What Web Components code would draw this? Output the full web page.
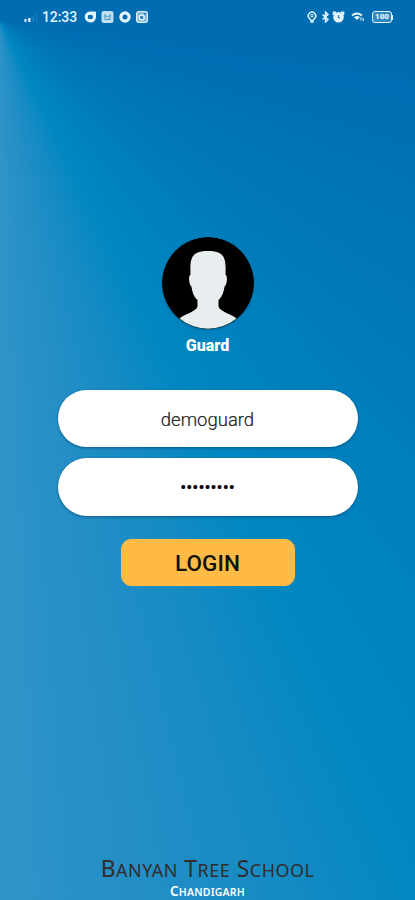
<!DOCTYPE html>
<html lang="en">
<head>
<meta charset="utf-8">
<meta name="viewport" content="width=device-width, initial-scale=1">
<title>Guard Login</title>
<style>
	body {
		margin: 0px;
		font-family: Roboto, sans-serif;
	}
</style>
</head>
<body>

<template id="status-bar-template">
	<style>
		:host {
			display: flex;
			justify-content: space-between;
			align-items: center;
			box-sizing: border-box;
			height: 34px;
			padding: 0px 22px 0px 23px;
			color: #e4f4fb;
		}
		div {
			display: flex;
			align-items: center;
		}
		svg {
			display: block;
			fill: none;
			stroke: currentColor;
		}
		.solid {
			fill: currentColor;
			stroke: none;
		}
		#time {
			width: 42px;
			font-size: 14px;
			font-weight: 500;
			line-height: 16px;
			letter-spacing: -0.1px;
			white-space: nowrap;
		}
		#battery {
			display: grid;
			place-items: center;
			box-sizing: border-box;
			width: 20px;
			height: 12px;
			border: 1px solid currentColor;
			border-radius: 3px;
			background: #ffffff30;
			font-size: 8px;
			font-weight: 900;
			line-height: 8px;
		}
		#tip {
			width: 1px;
			height: 5px;
			background: currentColor;
		}
	</style>
	<div>
		<svg width="19" height="12" viewBox="0 0 19 12" class="solid">
			<path d="M1.500 8h2v3h-2zM5.200 7h2.300v4H5.200z"/>
			<path d="M9.500 5H11v6H9.500zM13 3h1v8h-1z" opacity=".15"/>
		</svg>
		<span id="time">12:33</span>
		<svg width="13" height="12" viewBox="0 0 13 12" class="solid">
			<path fill-rule="evenodd" d="M6 .5h5q1 0 1 1V6a5.500 5.500 0 0 1-5.500 5.500A5.500 5.500 0 0 1 6 .5zM5 4Q3.800 4 3.800 6T5 8h2.500q1.500 0 1.500-2T7.500 4z"/>
		</svg>
		<svg width="13" height="12" viewBox="0 0 13 12" style="margin-left: 4px">
			<rect x=".5" width="12" height="12" rx="2.500" class="solid" opacity=".85"/>
			<path d="M3 3.500l1.500 1 2 1.500 2-1.500 1.500-1M4 4.500v4h5v-4" stroke="#3b8fc4"/>
		</svg>
		<svg width="12" height="12" viewBox="0 0 12 12" style="margin-left: 5px">
			<circle cx="6" cy="6" r="4.100" stroke-width="3.200"/>
		</svg>
		<svg width="12" height="12" viewBox="0 0 12 12" style="margin-left: 5px">
			<rect x=".7" y=".7" width="10.600" height="10.600" rx="2" stroke-width="1.300" fill="#75b4da"/>
			<circle cx="5.700" cy="6.500" r="2.500" stroke-width="1.500" fill="#2380bc"/>
			<path d="M8.200 2.800h1.800" stroke="#1274b7" stroke-width="1.500"/>
		</svg>
	</div>
	<div>
		<svg width="10" height="12" viewBox="0 0 10 12">
			<path d="M5 10.500L2.200 7.300A3.700 3.700 0 1 1 7.800 7.300z" stroke-width="1.500"/>
			<circle cx="5" cy="4.700" r="1.300"/>
			<path d="M3 11h4"/>
		</svg>
		<svg width="9" height="12" viewBox="0 0 9 12" style="margin-left: 4px">
			<path d="M1.500 3.500l5.500 5L4.500 11V1L7 3.500l-5.500 5" stroke-width="1.500"/>
		</svg>
		<svg width="13" height="12" viewBox="0 0 13 12" style="margin-left: 2px">
			<circle cx="6.500" cy="6.200" r="5.300" class="solid"/>
			<path d="M1.600 4V1.500H4M9 1.500h2.400V4" stroke-width="1.800"/>
			<path d="M6.500 4v2.400l1.600.8" stroke="#287fbb" stroke-width="1.200"/>
		</svg>
		<svg width="14" height="10" viewBox="0 0 14 10" style="margin-left: 6px">
			<path d="M1 3.500q5-4 10 0" stroke-width="1.800"/>
			<path d="M3 5.200q3-2.200 6 0L6 8z" class="solid"/>
			<path d="M10 5v3.500M12.200 6v3"/>
		</svg>
		<div style="margin-left: 7px">
			<span id="battery">100</span><span id="tip"></span>
		</div>
	</div>
</template>

<template id="user-avatar-template">
	<style>
		:host {
			display: flex;
			flex-direction: column;
			align-items: center;
			gap: 7px;
			color: white;
			font-size: 16px;
			font-weight: 900;
			line-height: 20px;
		}
		svg {
			display: block;
			border-radius: 50%;
			box-shadow: 0px 1px 2px #00406080;
		}
	</style>
	<svg width="92" height="92" viewBox="0 0 92 92">
		<circle cx="46" cy="46" r="46" fill="#000"/>
		<path fill="#e8eeef" d="M17.500 81.500C22 77 34 75 35.500 69.500V63C31 59 30 53 29.500 49.500C27 48 26 39 28.500 37.500C28 23 28 14 46 14S64 23 63.500 37.500C66 39 65 48 62.500 49.500C62 53 61 59 56.500 63V69.500C58 75 70 77 74.500 81.500A45 45 0 0 1 17.500 81.500z"/>
	</svg>
	<slot></slot>
</template>

<template id="login-field-template">
	<style>
		:host {
			display: flex;
			align-items: center;
			justify-content: center;
			box-sizing: border-box;
			width: 300px;
			height: 57px;
			padding-top: 2px;
			border-radius: 29px;
			background: white;
			box-shadow: 0px 1px 3px #00305080;
			color: #222;
			font-size: 18.500px;
			font-weight: 300;
			-webkit-text-stroke: 0.2px #222;
		}
		:host([type="password"]) {
			height: 58px;
			padding-top: 1px;
			color: black;
			font-size: 18px;
			font-weight: 400;
		}
	</style>
	<slot></slot>
</template>

<template id="login-button-template">
	<style>
		:host {
			display: block;
		}
		button {
			display: block;
			width: 174px;
			height: 47px;
			padding: 1px 0px 0px;
			border: 0px;
			border-radius: 11px;
			background: #ffbb46;
			box-shadow: 0px 0px 1px #a9a575;
			color: #111;
			font: 500 22.500px Roboto, sans-serif;
			letter-spacing: 0.1px;
		}
	</style>
	<button type="button"><slot></slot></button>
</template>

<template id="school-footer-template">
	<style>
		:host {
			display: flex;
			flex-direction: column;
			align-items: center;
			font-family: "Noto Sans", sans-serif;
			text-transform: uppercase;
			white-space: nowrap;
		}
		.word {
			display: inline-block;
			font-size: 0.78em;
		}
		/* capitals a step larger than the rest of the word */
		.word::first-letter {
			font-size: 1.28em;
		}
		#name {
			height: 27px;
			color: #302d2c;
			font-size: 23px;
			line-height: 26px;
			letter-spacing: 0.5px;
		}
		#city {
			height: 18px;
			color: white;
			font-size: 13.500px;
			font-weight: 600;
			line-height: 18px;
			letter-spacing: 0.2px;
		}
	</style>
	<div id="name"></div>
	<div id="city"></div>
</template>

<template id="login-screen-template">
	<style>
		:host {
			display: flex;
			flex-direction: column;
			box-sizing: border-box;
			height: 900px;
			overflow: hidden;
			background: conic-gradient(from 0deg at -1px 21px, #006db3 0deg, #006db3 97deg, #0074b7 117deg, #007dbc 135deg, #0087c1 153deg, #178bc3 163deg, #258fc6 172deg, #3094c8 180deg, #3094c8 190deg, #006db3 280deg);
		}
		main {
			display: flex;
			flex: 1;
			flex-direction: column;
			align-items: center;
			padding-top: 203px;
		}
		form {
			display: flex;
			flex-direction: column;
			align-items: center;
			gap: 11px;
			padding: 34px 0px 23px;
		}
	</style>
	<slot name="status"></slot>
	<main>
		<slot name="user"></slot>
		<form><slot></slot></form>
		<slot name="action"></slot>
	</main>
	<slot name="footer"></slot>
</template>

<login-screen>
	<status-bar slot="status"></status-bar>
	<user-avatar slot="user">Guard</user-avatar>
	<login-field>demoguard</login-field>
	<login-field type="password">•••••••••</login-field>
	<login-button slot="action">LOGIN</login-button>
	<school-footer slot="footer" name="Banyan Tree School" city="Chandigarh"></school-footer>
</login-screen>

<script>
/**
 * Base for all elements on the page. Clones the template named after
 * the element's tag into an open shadow root.
 */
class TemplateElement extends HTMLElement {
	constructor () {
		super();
		const template = document.querySelector(`#${this.localName}-template`);
		this.attachShadow({ mode: "open" });
		this.shadowRoot.append(template.content.cloneNode(true));
	}
}

class LoginScreen extends TemplateElement {}
class StatusBar extends TemplateElement {}
class UserAvatar extends TemplateElement {}
class LoginField extends TemplateElement {}
class LoginButton extends TemplateElement {}

class SchoolFooter extends TemplateElement {
	connectedCallback () {
		for (const id of ["name", "city"]) {
			const line = this.shadowRoot.querySelector(`#${id}`);
			line.replaceChildren();
			for (const text of this.getAttribute(id).split(" ")) {
				const word = document.createElement("span");
				word.className = "word";
				word.textContent = text;
				line.append(word, " ");
			}
		}
	}
}

customElements.define("login-screen", LoginScreen);
customElements.define("status-bar", StatusBar);
customElements.define("user-avatar", UserAvatar);
customElements.define("login-field", LoginField);
customElements.define("login-button", LoginButton);
customElements.define("school-footer", SchoolFooter);
</script>
</body>
</html>
